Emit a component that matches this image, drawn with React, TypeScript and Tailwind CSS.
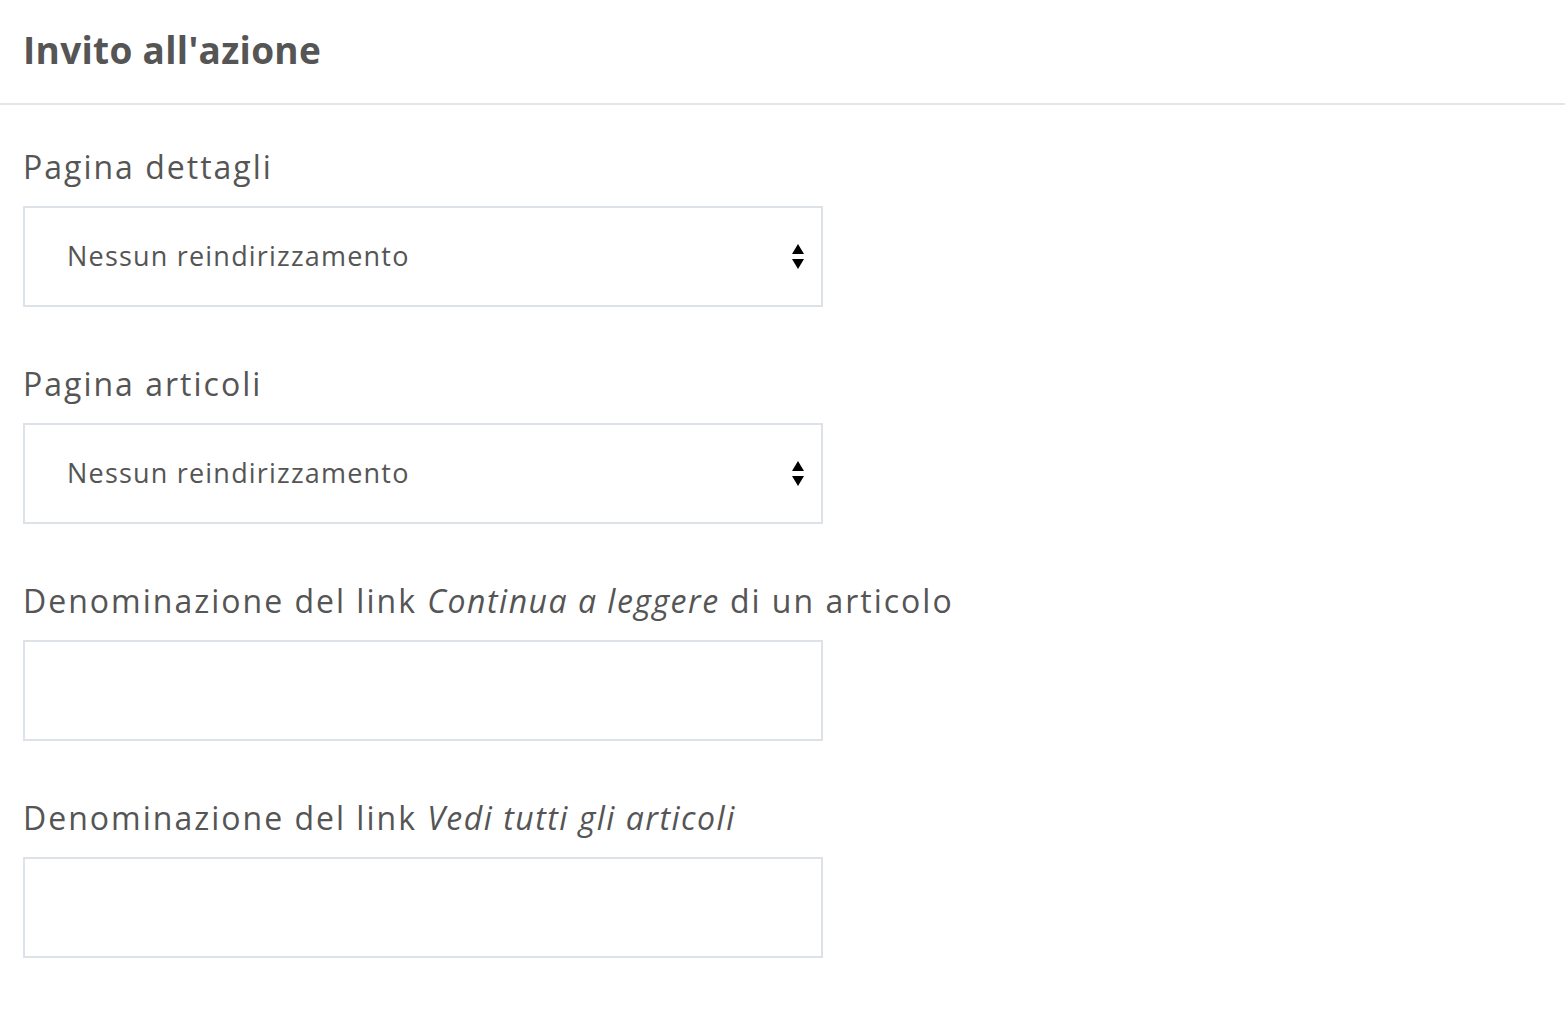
export default function App() {
  const fields = [
    { kind: "select", label: <>Pagina dettagli</> },
    { kind: "select", label: <>Pagina articoli</> },
    {
      kind: "input",
      label: (
        <>
          Denominazione del link <em className="font-medium italic tracking-[1.5px]">Continua a leggere</em> di un articolo
        </>
      ),
    },
    {
      kind: "input",
      label: (
        <>
          Denominazione del link <em className="font-medium italic tracking-[1.5px]">Vedi tutti gli articoli</em>
        </>
      ),
    },
  ];

  return (
    <div className="min-h-screen w-full bg-white text-[#555555]" style={{ fontFamily: "'Open Sans', Lato, sans-serif" }}>
      <div className="border-b-2 border-[#e6e6e6] px-[23px] pt-[24px] pb-[27px]">
        <h1 className="text-[37px] font-bold leading-[52px] tracking-[0.3px]">Invito all'azione</h1>
      </div>

      <div className="flex flex-col gap-[52px] px-[23px] pt-[37px]">
        {fields.map((f, i) => (
          <div key={i} className="flex flex-col gap-[14px]">
            <label className="whitespace-nowrap text-[32px] leading-[50px] tracking-[2px]">{f.label}</label>
            {f.kind === "select" ? (
              <div className="flex h-[101px] w-[800px] items-center justify-between border-2 border-[#dde1e8] bg-white pl-[42px] pr-[16px]">
                <span className="text-[27px] tracking-[1.2px]">Nessun reindirizzamento</span>
                <svg width="14" height="28" viewBox="0 0 14 28" className="text-black">
                  <path d="M7 1 L13 11 L1 11 Z" fill="currentColor" />
                  <path d="M1 16 L13 16 L7 26 Z" fill="currentColor" />
                </svg>
              </div>
            ) : (
              <div className="h-[101px] w-[800px] border-2 border-[#dde1e8] bg-white" />
            )}
          </div>
        ))}
      </div>
    </div>
  );
}
